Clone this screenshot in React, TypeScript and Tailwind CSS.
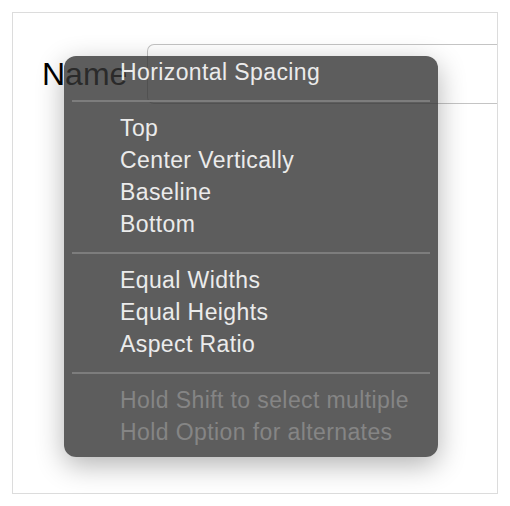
import React from 'react';

const sections: { label: string; disabled?: boolean }[][] = [
  [{ label: 'Horizontal Spacing' }],
  [{ label: 'Top' }, { label: 'Center Vertically' }, { label: 'Baseline' }, { label: 'Bottom' }],
  [{ label: 'Equal Widths' }, { label: 'Equal Heights' }, { label: 'Aspect Ratio' }],
  [
    { label: 'Hold Shift to select multiple', disabled: true },
    { label: 'Hold Option for alternates', disabled: true },
  ],
];

function ConstraintMenu() {
  return (
    <div className="absolute left-[64px] top-[56px] w-[374px] rounded-[12px] bg-[rgba(52,52,52,0.8)] pb-[9px] shadow-[0_8px_28px_rgba(0,0,0,0.3)]">
      {sections.map((items, i) => (
        <div key={i}>
          {/* separator between groups */}
          {i > 0 && <div className="mx-2 mb-[10px] mt-3 h-[2px] bg-[#7d7d7d]" />}
          {items.map((item) => (
            <div
              key={item.label}
              className={`h-8 pl-14 text-[23px] leading-8 tracking-[0.4px] whitespace-nowrap ${
                item.disabled ? 'text-[#858585]' : 'text-[#ebebeb]'
              }`}
            >
              {item.label}
            </div>
          ))}
        </div>
      ))}
    </div>
  );
}

export default function App() {
  return (
    <div className="relative h-[506px] w-[510px] bg-white p-3 font-['Liberation_Sans',Arial,sans-serif]">
      {/* Form frame */}
      <div className="h-[482px] w-[486px] overflow-hidden border border-[#dcdcdc] pl-[29px] pt-[31px]">
        <div className="flex h-[60px] items-center gap-5">
          <span className="text-[32px] leading-none text-black">Name</span>
          <div className="h-[60px] flex-1 rounded-l-[7px] border border-r-0 border-[#c4c4c4]" />
        </div>
      </div>

      <ConstraintMenu />
    </div>
  );
}
